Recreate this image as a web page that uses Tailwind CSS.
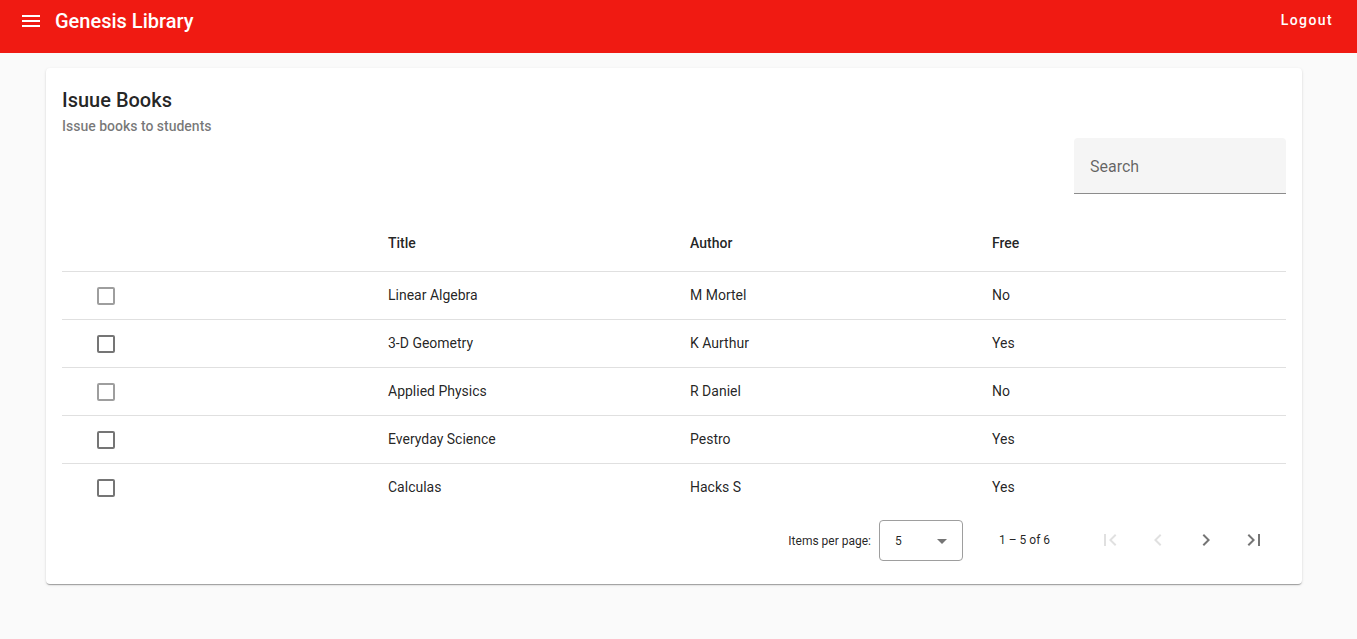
<!DOCTYPE html>
<html lang="en">
<head>
<meta charset="utf-8">
<meta name="viewport" content="width=device-width, initial-scale=1">
<title>Genesis Library</title>
<script src="https://cdn.jsdelivr.net/npm/@tailwindcss/browser@4"></script>
</head>
<body class="min-h-screen bg-[#fafafa] font-[Roboto,sans-serif] text-sm text-black/87">
<header class="flex items-start justify-between bg-[#f01a12] pt-[9px] pr-6 pb-5 pl-5 text-white">
  <div class="flex items-center gap-[11px]">
    <button type="button" aria-label="Open menu" class="flex size-6 items-center justify-center">
      <svg class="size-6" viewBox="0 0 24 24" fill="currentColor" shape-rendering="crispEdges"><path d="M2 6h18v2H2zM2 11h18v2H2zM2 16h18v2H2z"/></svg>
    </button>
    <h1 class="text-xl leading-6 font-medium">Genesis Library</h1>
  </div>
  <button type="button" class="text-sm leading-[22px] font-medium tracking-widest">Logout</button>
</header>

<main class="mt-[15px] mr-[55px] mb-8 ml-[46px] rounded-sm bg-white p-4 shadow-[0_2px_1px_-1px_rgba(0,0,0,0.2),0_1px_1px_0_rgba(0,0,0,0.14),0_1px_3px_0_rgba(0,0,0,0.12)]">
  <h2 class="text-xl leading-8 font-medium">Isuue Books</h2>
  <p class="mb-0.5 leading-5 font-medium text-black/54">Issue books to students</p>
  <div class="mb-5 flex justify-end">
    <input type="search" aria-label="Search" placeholder="Search" class="h-14 w-[212px] rounded-t-sm border-b border-[#8c8c8c] bg-[#f5f5f5] px-4 pt-0.5 text-base placeholder:text-black/60">
  </div>

  <table class="w-full table-fixed border-separate border-spacing-0 text-left">
    <colgroup><col class="w-[310px]"><col><col><col class="w-[310px]"></colgroup>
    <thead>
      <tr class="h-[58px] *:border-b *:border-black/12 *:px-4 *:font-medium">
        <td></td><th scope="col">Title</th><th scope="col">Author</th><th scope="col">Free</th>
      </tr>
    </thead>
    <tbody class="[&>tr]:h-12 [&_td]:border-b [&_td]:border-black/12 [&_td]:px-4 [&_td]:pb-0.5 [&_td:first-child]:pb-0 [&>tr:last-child>td]:border-b-0">
      <tr><td><input type="checkbox" disabled aria-label="Linear Algebra" class="ml-[19px] block size-[18px] appearance-none rounded-xs border-2 border-black/38"></td><td>Linear Algebra</td><td>M Mortel</td><td>No</td></tr>
      <tr><td><input type="checkbox" aria-label="3-D Geometry" class="ml-[19px] block size-[18px] appearance-none rounded-xs border-2 border-black/54 checked:bg-black/54"></td><td>3-D Geometry</td><td>K Aurthur</td><td>Yes</td></tr>
      <tr><td><input type="checkbox" disabled aria-label="Applied Physics" class="ml-[19px] block size-[18px] appearance-none rounded-xs border-2 border-black/38"></td><td>Applied Physics</td><td>R Daniel</td><td>No</td></tr>
      <tr><td><input type="checkbox" aria-label="Everyday Science" class="ml-[19px] block size-[18px] appearance-none rounded-xs border-2 border-black/54 checked:bg-black/54"></td><td>Everyday Science</td><td>Pestro</td><td>Yes</td></tr>
      <tr><td><input type="checkbox" aria-label="Calculas" class="ml-[19px] block size-[18px] appearance-none rounded-xs border-2 border-black/54 checked:bg-black/54"></td><td>Calculas</td><td>Hacks S</td><td>Yes</td></tr>
    </tbody>
  </table>

  <nav aria-label="Pagination" class="flex h-14 items-center justify-end pr-2 text-xs">
    <label for="page-size" class="pt-0.5">Items per page:</label>
    <div class="ml-2 grid w-[84px] items-center">
      <select id="page-size" class="col-start-1 row-start-1 h-[41px] appearance-none rounded-sm border border-[#9e9e9e] bg-white pt-0.5 pl-[15px]">
        <option>5</option><option>10</option><option>25</option>
      </select>
      <svg class="pointer-events-none col-start-1 row-start-1 mt-0.5 mr-4 h-[5px] w-[10px] justify-self-end" viewBox="0 0 10 5" fill="#757575"><path d="M0 0h10L5 5z"/></svg>
    </div>
    <span class="mr-8 ml-9 min-w-[55px]">1 – 5 of 6</span>
    <button type="button" disabled aria-label="First page" class="flex size-12 items-center justify-center text-black/12"><svg class="size-6" viewBox="0 0 24 24" fill="currentColor"><path d="M18.41 16.59L13.82 12l4.59-4.59L17 6l-6 6 6 6zM6 6h2v12H6z"/></svg></button>
    <button type="button" disabled aria-label="Previous page" class="flex size-12 items-center justify-center text-black/12"><svg class="size-6" viewBox="0 0 24 24" fill="currentColor"><path d="M15.41 7.41L14 6l-6 6 6 6 1.41-1.41L10.83 12z"/></svg></button>
    <button type="button" aria-label="Next page" class="flex size-12 items-center justify-center text-black/54"><svg class="size-6" viewBox="0 0 24 24" fill="currentColor"><path d="M10 6L8.59 7.41 13.17 12l-4.58 4.59L10 18l6-6z"/></svg></button>
    <button type="button" aria-label="Last page" class="flex size-12 items-center justify-center text-black/54"><svg class="size-6" viewBox="0 0 24 24" fill="currentColor"><path d="M5.59 7.41L10.18 12l-4.59 4.59L7 18l6-6-6-6zM16 6h2v12h-2z"/></svg></button>
  </nav>
</main>
</body>
</html>
